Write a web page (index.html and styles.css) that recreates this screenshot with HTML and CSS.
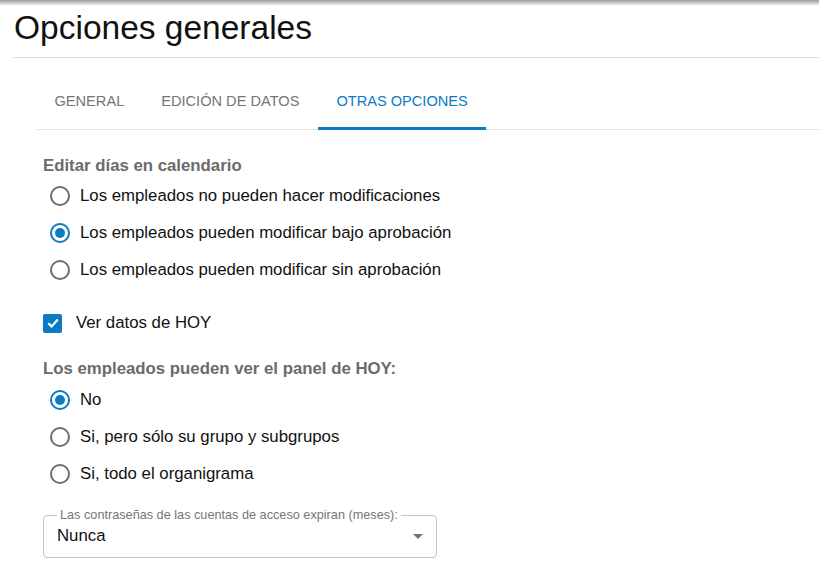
FILE: index.html
```html
<!DOCTYPE html>
<html>
<head>
  <title>Opciones generales</title>
  <link rel="stylesheet" href="styles.css">
</head>
<body>
  <div class="top-shadow"></div>
  <div class="page">
    <h1 class="page-title">Opciones generales</h1>

    <div class="tabs">
      <div class="tab">GENERAL</div>
      <div class="tab">EDICIÓN DE DATOS</div>
      <div class="tab active">OTRAS OPCIONES</div>
    </div>

    <div class="content">
      <div class="group-label">Editar días en calendario</div>
      <div class="radio-list">
        <label class="radio"><span class="circle"></span>Los empleados no pueden hacer modificaciones</label>
        <label class="radio checked"><span class="circle"></span>Los empleados pueden modificar bajo aprobación</label>
        <label class="radio"><span class="circle"></span>Los empleados pueden modificar sin aprobación</label>
      </div>

      <label class="checkbox">
        <span class="box">
          <svg width="14" height="14" viewBox="0 0 14 14"><path d="M2.2 7.2 L5.6 10.4 L11.8 3.6" fill="none" stroke="#fff" stroke-width="2.2"/></svg>
        </span>
        Ver datos de HOY
      </label>

      <div class="group-label">Los empleados pueden ver el panel de HOY:</div>
      <div class="radio-list">
        <label class="radio checked"><span class="circle"></span>No</label>
        <label class="radio"><span class="circle"></span>Si, pero sólo su grupo y subgrupos</label>
        <label class="radio"><span class="circle"></span>Si, todo el organigrama</label>
      </div>

      <fieldset class="select-field">
        <legend>Las contraseñas de las cuentas de acceso expiran (meses):</legend>
        <div class="select-value">
          <span>Nunca</span>
          <span class="arrow"></span>
        </div>
      </fieldset>
    </div>
  </div>
</body>
</html>
```

FILE: styles.css
```css
body {
  margin: 0;
  font-family: "Liberation Sans", Arial, sans-serif;
  color: #111;
  background: #fff;
}

.top-shadow {
  height: 6px;
  background: linear-gradient(#9a9a9a, #fff);
}

.page {
  padding-left: 13px;
}

.page-title {
  margin: 0;
  padding: 2px 0 9px 1px;
  font-size: 33.5px;
  font-weight: normal;
  line-height: 40px;
  border-bottom: 1px solid #dedede;
}

.tabs {
  display: flex;
  margin: 22px 0 0 23px;
  border-bottom: 1px solid #e2e2e2;
}

.tab {
  padding: 0 18.5px;
  height: 47px;
  line-height: 42px;
  font-size: 14.6px;
  color: #757575;
  border-bottom: 3px solid transparent;
  margin-bottom: -1px;
}

.tab.active {
  color: #0b7bc4;
  border-bottom-color: #0b7bc4;
}

.content {
  padding: 26px 0 0 30px;
  font-size: 16.8px;
}

.group-label {
  font-weight: bold;
  color: #6b6b6b;
  margin-bottom: 9px;
}

.radio-list {
  display: flex;
  flex-direction: column;
  gap: 16px;
  padding-left: 7px;
  margin-bottom: 28px;
}

.radio-list + .checkbox {
  margin-top: 33px;
}

.radio {
  display: flex;
  align-items: center;
  gap: 10px;
  height: 21px;
}

.circle {
  width: 16px;
  height: 16px;
  border: 2px solid #6e6e6e;
  border-radius: 50%;
  box-sizing: content-box;
  position: relative;
}

.radio.checked .circle {
  border-color: #0b7bc4;
}

.radio.checked .circle::after {
  content: "";
  position: absolute;
  left: 3px;
  top: 3px;
  width: 10px;
  height: 10px;
  border-radius: 50%;
  background: #0b7bc4;
}

.checkbox {
  display: flex;
  align-items: center;
  gap: 14px;
  margin-bottom: 26px;
}

.box {
  width: 19px;
  height: 19px;
  border-radius: 2px;
  background: #0b7bc4;
  display: flex;
  align-items: center;
  justify-content: center;
}

.checkbox + .group-label {
  margin-bottom: 10px;
}

.select-field {
  width: 394px;
  margin: -4px 0 0 0;
  padding: 0 13px;
  border: 1px solid #c4c4c4;
  border-radius: 4px;
  box-sizing: border-box;
}

.select-field legend {
  font-size: 12.7px;
  color: #767676;
  padding: 0 3px;
  margin-left: 0;
}

.select-value {
  display: flex;
  justify-content: space-between;
  align-items: center;
  height: 28px;
  padding-bottom: 7px;
}

.arrow {
  width: 0;
  height: 0;
  border-left: 5px solid transparent;
  border-right: 5px solid transparent;
  border-top: 5px solid #757575;
  margin-right: 0;
}
```
